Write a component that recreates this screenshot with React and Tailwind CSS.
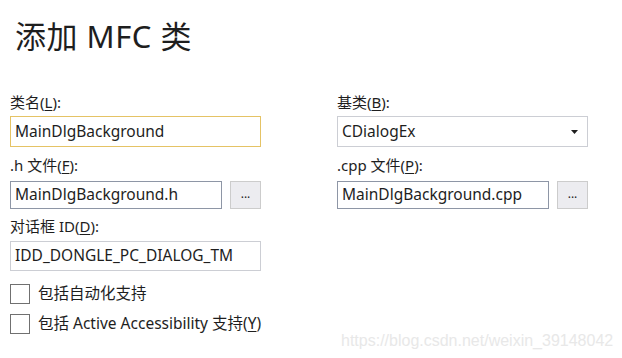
import React from 'react';

const font = { fontFamily: '"Noto Sans", "Noto Sans CJK SC", sans-serif' };

const Label = ({ children }) => (
  <div className="h-[22px] text-[15px] leading-[22px] text-[#1e1e1e]">{children}</div>
);

const U = ({ children }) => <span className="underline underline-offset-2">{children}</span>;

const Field = ({ value, className = '' }) => (
  <div className={`flex h-[28px] items-center border bg-white px-[4px] text-[15.5px] text-[#1e1e1e] ${className}`}>
    {value}
  </div>
);

const Browse = () => (
  <div className="flex h-[28px] w-[31px] items-center justify-center border border-[#cccccc] bg-[#ececf0] pb-[2px] text-[12px] text-[#1e1e1e]">
    ...
  </div>
);

const Check = ({ children }) => (
  <div className="flex h-[20px] items-center gap-[8px] whitespace-nowrap">
    <div className="h-[20px] w-[20px] shrink-0 border border-[#707070] bg-white" />
    <span className="text-[15.5px] text-[#1e1e1e]">{children}</span>
  </div>
);

export default function App() {
  return (
    <div className="relative h-[358px] w-[622px] overflow-hidden bg-white" style={font}>
      <h1 className="pl-[15px] pt-[16px] text-[31px] leading-[40px] tracking-[0.5px] text-[#1e1e1e]">添加 MFC 类</h1>

      <div className="mt-[35px] flex gap-[76px] pl-[10px]">
        <div className="flex w-[251px] flex-col">
          <Label>类名(<U>L</U>):</Label>
          <Field value="MainDlgBackground" className="mt-[3px] h-[31px] border-[#e5c365]" />
          <div className="mt-[7px]"><Label>.h 文件(<U>F</U>):</Label></div>
          <div className="mt-[5px] flex gap-[8px]">
            <Field value="MainDlgBackground.h" className="w-[212px] border-[#8e96a6]" />
            <Browse />
          </div>
          <div className="mt-[6px]"><Label>对话框 ID(<U>D</U>):</Label></div>
          <Field value="IDD_DONGLE_PC_DIALOG_TM" className="mt-[4px] h-[30px] border-[#ccced4]" />
          <div className="mt-[13px] flex flex-col gap-[10px]">
            <Check>包括自动化支持</Check>
            <Check>包括 Active Accessibility 支持(<U>Y</U>)</Check>
          </div>
        </div>

        <div className="flex w-[251px] flex-col">
          <Label>基类(<U>B</U>):</Label>
          <div className="mt-[3px] flex h-[31px] items-center justify-between border border-[#ccced4] bg-white pl-[4px] pr-[9px] text-[15.5px] text-[#1e1e1e]">
            <span>CDialogEx</span>
            <svg width="7" height="4" viewBox="0 0 7 4"><path d="M0 0h7L3.5 4z" fill="#1e1e1e" /></svg>
          </div>
          <div className="mt-[7px]"><Label>.cpp 文件(<U>P</U>):</Label></div>
          <div className="mt-[5px] flex gap-[8px]">
            <Field value="MainDlgBackground.cpp" className="w-[212px] border-[#8e96a6]" />
            <Browse />
          </div>
        </div>
      </div>

      <div
        className="absolute left-[341px] top-[329px] text-[16px] text-[#e8e8e8]"
        style={{ fontFamily: '"Liberation Sans", Arial, sans-serif' }}
      >
        https://blog.csdn.net/weixin_39148042
      </div>
    </div>
  );
}
